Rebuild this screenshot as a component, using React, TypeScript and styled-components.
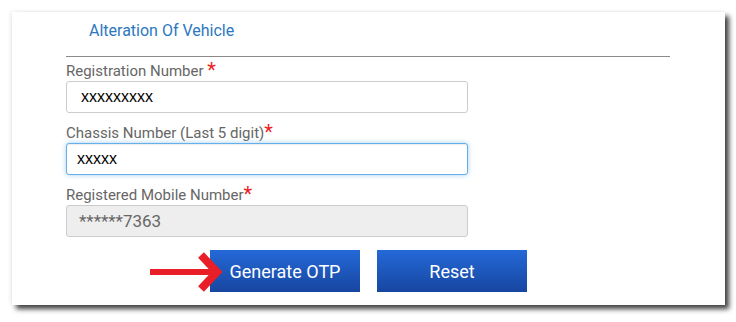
import React from "react";
import styled, { createGlobalStyle } from "styled-components";

const GlobalStyle = createGlobalStyle`
  html, body {
    margin: 0;
    padding: 0;
    background: #ffffff;
  }
  body {
    font-family: Roboto, "Liberation Sans", Arial, sans-serif;
  }
`;

function App() {
  return (
    <Page>
      <GlobalStyle />
      <Panel>
        <Header>
          <Title>Alteration Of Vehicle</Title>
        </Header>
        <Divider />
        <Form>
          <Field>
            <Label>
              Registration Number <Star>*</Star>
            </Label>
            <Input defaultValue="xxxxxxxxx" $inset={14} />
          </Field>
          <Field>
            <Label>
              Chassis Number (Last 5 digit)<Star>*</Star>
            </Label>
            <Input defaultValue="xxxxx" $focused />
          </Field>
          <Field>
            <Label>
              Registered Mobile Number<Star>*</Star>
            </Label>
            <Input defaultValue="******7363" $readOnlyLook readOnly $inset={12} />
          </Field>
          <ButtonRow>
            <ArrowHolder>
              <Arrow width="76" height="44" viewBox="0 0 76 44">
                <line x1="2" y1="22" x2="64" y2="22" stroke="#e81f27" strokeWidth="6" />
                <polyline
                  points="53,5 69,22 53,39"
                  fill="none"
                  stroke="#e81f27"
                  strokeWidth="8"
                  strokeLinejoin="miter"
                />
              </Arrow>
              <Button>Generate OTP</Button>
            </ArrowHolder>
            <Button>Reset</Button>
          </ButtonRow>
        </Form>
      </Panel>
    </Page>
  );
}

const Page = styled.div`
  padding: 12px;
  width: 736px;
  height: 322px;
  box-sizing: border-box;
`;

const Panel = styled.div`
  width: 713px;
  height: 293px;
  box-sizing: border-box;
  background: #ffffff;
  box-shadow: 4px 4px 5px rgba(0, 0, 0, 0.75), -2px -1px 4px rgba(0, 0, 0, 0.06);
  display: flex;
  flex-direction: column;
`;

const Header = styled.div`
  height: 44px;
  padding: 9px 0 0 77px;
  box-sizing: border-box;
`;

const Title = styled.div`
  font-size: 16px;
  line-height: 20px;
  color: #2b78c0;
`;

const Divider = styled.div`
  margin-left: 54px;
  width: 604px;
  height: 1px;
  background: #8a8a8a;
`;

const Form = styled.div`
  padding: 2px 0 0 54px;
  display: flex;
  flex-direction: column;
  gap: 8px;
`;

const Field = styled.div`
  display: flex;
  flex-direction: column;
`;

const Label = styled.div`
  font-size: 15px;
  line-height: 20px;
  padding-top: 2px;
  color: #666666;
`;

const Star = styled.span`
  color: #ee1c25;
  font-size: 20px;
  line-height: 14px;
  vertical-align: -1px;
`;

const Input = styled.input<{ $focused?: boolean; $readOnlyLook?: boolean; $inset?: number }>`
  width: 402px;
  height: 32px;
  box-sizing: border-box;
  padding: 0 ${(p) => p.$inset ?? 10}px;
  border: 1px solid ${(p) => (p.$focused ? "#66afe9" : "#cccccc")};
  border-radius: 3px;
  outline: none;
  background: ${(p) => (p.$readOnlyLook ? "#eeeeee" : "#ffffff")};
  color: ${(p) => (p.$readOnlyLook ? "#666666" : "#000000")};
  font-family: ${(p) => (p.$readOnlyLook ? 'Roboto, sans-serif' : '"Liberation Sans", Arial, sans-serif')};
  font-size: ${(p) => (p.$readOnlyLook ? "17px" : "16px")};
  box-shadow: ${(p) =>
    p.$focused ? "inset 0 1px 1px rgba(0,0,0,0.075), 0 0 5px rgba(102,175,233,0.6)" : "none"};
`;

const ButtonRow = styled.div`
  display: flex;
  gap: 17px;
  margin: 5px 0 0 144px;
`;

const ArrowHolder = styled.div`
  position: relative;
  display: flex;
`;

const Arrow = styled.svg`
  position: absolute;
  left: -62px;
  top: 0;
`;

const Button = styled.button`
  width: 150px;
  height: 42px;
  border: none;
  border-radius: 0;
  background: linear-gradient(to bottom, #2469d8, #1746a0);
  color: #ffffff;
  font-family: Roboto, "Liberation Sans", sans-serif;
  font-size: 18px;
  padding: 0;
  cursor: pointer;
`;

export default App;
